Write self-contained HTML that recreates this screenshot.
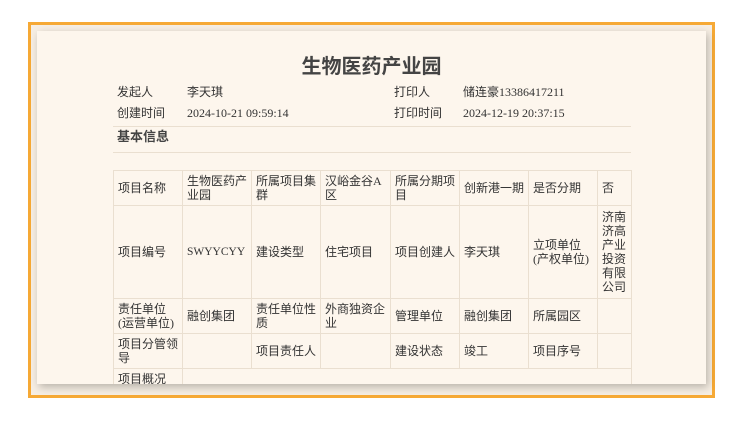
<!DOCTYPE html>
<html><head><meta charset="utf-8"><style>
body{margin:0;width:754px;height:426px;background:#fff;position:relative;overflow:hidden;font-family:"Liberation Serif","Noto Sans CJK SC",serif;color:#333;font-size:12px}
.frame{position:absolute;left:28px;top:22px;width:681px;height:370px;border:3px solid #f6a935;background:#f6eee3}
.paper{position:absolute;left:37px;top:31px;width:669px;height:353px;background:#fdf6ed;box-shadow:2px 3px 8px rgba(0,0,0,.25);overflow:hidden}
.t{position:absolute;white-space:nowrap;line-height:14px}
.cjk{font-family:"Liberation Sans","Noto Sans CJK SC",sans-serif}
h1{position:absolute;left:0;width:669px;top:19px;margin:0;text-align:center;font:bold 20px "Liberation Sans","Noto Sans CJK SC",sans-serif;color:#444}
.hr{position:absolute;left:76px;width:518px;height:1px;background:#eadfd0}
table{position:absolute;left:76px;top:139px;border-collapse:collapse;table-layout:fixed;font-family:"Liberation Serif","Noto Sans CJK SC",serif}
td{border:1px solid #eadfd0;padding:0 4px;line-height:14px;vertical-align:middle;font-size:12px;color:#333;word-break:break-all}
</style></head><body>
<div class="frame"></div>
<div class="paper">
<h1>生物医药产业园</h1>
<div class="t cjk" style="left:80px;top:54px">发起人</div>
<div class="t cjk" style="left:150px;top:54px">李天琪</div>
<div class="t cjk" style="left:357px;top:54px">打印人</div>
<div class="t" style="left:426px;top:54px">储连豪13386417211</div>
<div class="t cjk" style="left:80px;top:75px">创建时间</div>
<div class="t" style="left:150px;top:75px">2024-10-21 09:59:14</div>
<div class="t cjk" style="left:357px;top:75px">打印时间</div>
<div class="t" style="left:426px;top:75px">2024-12-19 20:37:15</div>
<div class="hr" style="top:95px"></div>
<div class="t cjk" style="left:80px;top:99px;font-weight:bold;font-size:13px;color:#444">基本信息</div>
<div class="hr" style="top:121px"></div>
<table>
<colgroup><col style="width:69px"><col style="width:69px"><col style="width:69px"><col style="width:70px"><col style="width:69px"><col style="width:69px"><col style="width:69px"><col style="width:34px"></colgroup>
<tr style="height:35px"><td>项目名称</td><td>生物医药产业园</td><td>所属项目集群</td><td>汉峪金谷A区</td><td>所属分期项目</td><td>创新港一期</td><td>是否分期</td><td>否</td></tr>
<tr style="height:93px"><td>项目编号</td><td style="white-space:nowrap;font-size:11.5px">SWYYCYY</td><td>建设类型</td><td>住宅项目</td><td>项目创建人</td><td>李天琪</td><td>立项单位(产权单位)</td><td>济南济高产业投资有限公司</td></tr>
<tr style="height:35px"><td>责任单位(运营单位)</td><td>融创集团</td><td>责任单位性质</td><td>外商独资企业</td><td>管理单位</td><td>融创集团</td><td>所属园区</td><td></td></tr>
<tr style="height:35px"><td>项目分管领导</td><td></td><td>项目责任人</td><td></td><td>建设状态</td><td>竣工</td><td>项目序号</td><td></td></tr>
<tr style="height:35px"><td style="vertical-align:top;padding-top:3px">项目概况</td><td colspan="7"></td></tr>
</table>
</div>
</body></html>
